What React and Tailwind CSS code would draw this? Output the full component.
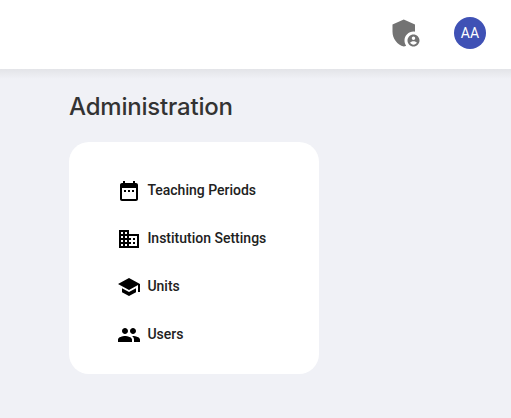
const ICONS = {
  periods: 'M9 11H7v2h2v-2zm4 0h-2v2h2v-2zm4 0h-2v2h2v-2zm2-7h-1V2h-2v2H8V2H6v2H5c-1.11 0-1.99.9-1.99 2L3 20c0 1.1.89 2 2 2h14c1.1 0 2-.9 2-2V6c0-1.1-.9-2-2-2zm0 16H5V9h14v11z',
  business: 'M12 7V3H2v18h20V7H12zM6 19H4v-2h2v2zm0-4H4v-2h2v2zm0-4H4V9h2v2zm0-4H4V5h2v2zm4 12H8v-2h2v2zm0-4H8v-2h2v2zm0-4H8V9h2v2zm0-4H8V5h2v2zm10 12h-8v-2h2v-2h-2v-2h2v-2h-2V9h8v10zm-2-8h-2v2h2v-2zm0 4h-2v2h2v-2z',
  school: 'M5 13.18v4L12 21l7-3.82v-4L12 17l-7-3.82zM12 3L1 9l11 6 9-4.91V17h2V9L12 3z',
  people: 'M16 11c1.66 0 2.99-1.34 2.99-3S17.66 5 16 5c-1.66 0-3 1.34-3 3s1.34 3 3 3zm-8 0c1.66 0 2.99-1.34 2.99-3S9.66 5 8 5C6.34 5 5 6.34 5 8s1.34 3 3 3zm0 2c-2.33 0-7 1.17-7 3.5V19h14v-2.5c0-2.33-4.67-3.5-7-3.5zm8 0c-.29 0-.62.02-.97.05 1.16.84 1.97 1.97 1.97 3.45V19h6v-2.5c0-2.33-4.67-3.5-7-3.5z',
  admin: 'M17 11c.34 0 .67.04 1 .09V6.27L10.5 3 3 6.27v4.91c0 4.54 3.2 8.79 7.5 9.82.55-.13 1.08-.32 1.6-.55-.69-.98-1.1-2.17-1.1-3.45 0-3.31 2.69-6 6-6zM17 13c-2.21 0-4 1.79-4 4s1.79 4 4 4 4-1.79 4-4-1.79-4-4-4zm0 1.38c.62 0 1.12.51 1.12 1.12s-.51 1.12-1.12 1.12-1.12-.51-1.12-1.12.5-1.12 1.12-1.12zm0 5.37c-.93 0-1.74-.46-2.24-1.17.05-.72 1.51-1.08 2.24-1.08s2.19.36 2.24 1.08c-.5.71-1.31 1.17-2.24 1.17z',
};

const LINKS = [
  { label: 'Teaching Periods', icon: 'periods' },
  { label: 'Institution Settings', icon: 'business' },
  { label: 'Units', icon: 'school' },
  { label: 'Users', icon: 'people' },
];

function Icon({ name, className }) {
  return (
    <svg viewBox="0 0 24 24" fill="currentColor" aria-hidden="true" className={className}>
      <path d={ICONS[name]} />
    </svg>
  );
}

export default function App() {
  return (
    <div className="h-screen overflow-hidden bg-[#f0f1f6] font-['Roboto',sans-serif]">
      <header className="flex h-[69px] items-center justify-end bg-white pr-[25px] pb-[3px]">
        <button className="mr-[30px] text-[#737373]" aria-label="Administration">
          <Icon name="admin" className="size-9" />
        </button>
        <button className="flex size-8 items-center justify-center rounded-full bg-[#3f51b5] text-sm text-white">AA</button>
      </header>
      <div className="h-2.5 bg-linear-to-b from-[#e3e4e8] to-[#f0f1f6]" />
      <main className="pl-[69px] pt-3">
        <h1 className="font-['Inter',sans-serif] text-[24px] leading-8 font-medium tracking-[-0.2px] text-[#333]">Administration</h1>
        <nav className="mt-[19px] flex h-[232px] w-[250px] flex-col rounded-[20px] bg-white pt-6 pl-12">
          {LINKS.map(({ label, icon }) => (
            <a key={label} href="#" className="flex h-12 items-center gap-1.5 text-sm font-medium text-[#212121]">
              <Icon name={icon} className="mt-0.5 size-6 text-black" />
              <span className="pl-[0.4px]">{label}</span>
            </a>
          ))}
        </nav>
      </main>
    </div>
  );
}
